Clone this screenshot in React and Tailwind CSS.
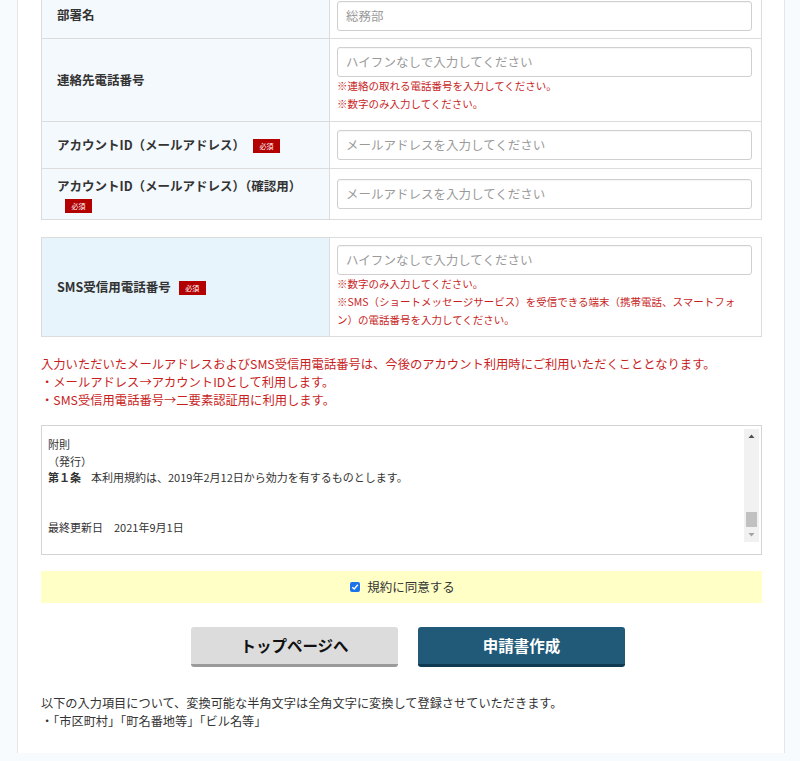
import React from "react";

const Badge = () => (
  <span className="inline-block align-middle ml-[8px] w-[27px] h-[14px] bg-[#b30000] text-white text-[7px] leading-[14px] text-center font-normal">必須</span>
);

const Input = ({ placeholder }) => (
  <div className="h-[30px] w-full border border-[#cfcfcf] rounded-[3px] bg-white flex items-center px-[8px] text-[12.5px] text-[#9a9a9a] shadow-[inset_0_1px_1px_rgba(0,0,0,0.04)]">
    {placeholder}
  </div>
);

const Note = ({ children }) => (
  <p className="text-[10.5px] leading-[18px] text-[#c81e1e]">{children}</p>
);

export default function App() {
  return (
    <div
      className="min-h-[761px] bg-[#f8fbfd] overflow-hidden"
      style={{ fontFamily: '"Noto Sans CJK JP", "Noto Sans", sans-serif' }}
    >
      <div className="ml-[17px] w-[768px] min-h-[761px] bg-white border-x border-[#e6e6e6] pl-[23px] pr-[22px] pb-[20px] text-[#333]">
        {/* first table */}
        <div className="mt-[-8px] border border-[#dcdcdc]">
          <div className="flex border-b border-[#dcdcdc]">
            <div className="w-[288px] shrink-0 bg-[#f3f9fd] border-r border-[#dcdcdc] pl-[15px] flex items-center text-[12.5px] font-bold">
              部署名
            </div>
            <div className="flex-1 pl-[7px] pr-[9px] pt-[8px] pb-[7px]">
              <Input placeholder="総務部" />
            </div>
          </div>
          <div className="flex border-b border-[#dcdcdc]">
            <div className="w-[288px] shrink-0 bg-[#f3f9fd] border-r border-[#dcdcdc] pl-[15px] flex items-center text-[12.5px] font-bold">
              連絡先電話番号
            </div>
            <div className="flex-1 pl-[7px] pr-[9px] pt-[8px] pb-[8px]">
              <Input placeholder="ハイフンなしで入力してください" />
              <Note>※連絡の取れる電話番号を入力してください。</Note>
              <Note>※数字のみ入力してください。</Note>
            </div>
          </div>
          <div className="flex border-b border-[#dcdcdc]">
            <div className="w-[288px] shrink-0 bg-[#f3f9fd] border-r border-[#dcdcdc] pl-[15px] flex items-center text-[12.5px] font-bold">
              <span>
                アカウントID（メールアドレス）
                <Badge />
              </span>
            </div>
            <div className="flex-1 pl-[7px] pr-[9px] py-[8px]">
              <Input placeholder="メールアドレスを入力してください" />
            </div>
          </div>
          <div className="flex">
            <div className="w-[288px] shrink-0 bg-[#f3f9fd] border-r border-[#dcdcdc] pl-[15px] pr-[10px] pt-[8px] pb-[6px] text-[12.5px] leading-[18px] font-bold">
              <div>アカウントID（メールアドレス）（確認用）</div>
              <div className="leading-[18px]">
                <Badge />
              </div>
            </div>
            <div className="flex-1 pl-[7px] pr-[9px] flex items-center">
              <Input placeholder="メールアドレスを入力してください" />
            </div>
          </div>
        </div>

        {/* SMS table */}
        <div className="mt-[17px] border border-[#dcdcdc] flex">
          <div className="w-[288px] shrink-0 bg-[#e8f4fb] border-r border-[#dcdcdc] pl-[15px] flex items-center text-[12.5px] font-bold">
            <span>
              SMS受信用電話番号
              <Badge />
            </span>
          </div>
          <div className="flex-1 pl-[7px] pr-[9px] pt-[7px] pb-[7px]">
            <Input placeholder="ハイフンなしで入力してください" />
            <Note>※数字のみ入力してください。</Note>
            <Note>
              ※SMS（ショートメッセージサービス）を受信できる端末（携帯電話、スマートフォ
              <br />
              ン）の電話番号を入力してください。
            </Note>
          </div>
        </div>

        {/* red paragraph */}
        <div className="mt-[18px] text-[12.3px] leading-[18px] text-[#c81e1e]">
          <p>入力いただいたメールアドレスおよびSMS受信用電話番号は、今後のアカウント利用時にご利用いただくこととなります。</p>
          <p>・メールアドレス→アカウントIDとして利用します。</p>
          <p>・SMS受信用電話番号→二要素認証用に利用します。</p>
        </div>

        {/* terms box */}
        <div className="mt-[16px] border border-[#d4d4d4] pt-[3px] pl-[3px] pr-[2px] pb-[12px] flex">
          <div className="flex-1 h-[113px] pl-[3px] pt-[7px] text-[11px] leading-[16.5px] text-[#333]">
            <p>附則</p>
            <p>（発行）</p>
            <p>
              <span className="font-bold">第１条</span>
              <span className="ml-[10px]">本利用規約は、2019年2月12日から効力を有するものとします。</span>
            </p>
            <p>&nbsp;</p>
            <p>&nbsp;</p>
            <p>最終更新日　2021年9月1日</p>
          </div>
          <div className="w-[15px] h-[113px] bg-[#f1f1f1] flex flex-col items-center">
            <svg width="15" height="15" viewBox="0 0 15 15" className="shrink-0">
              <path d="M4.5 9 L10.5 9 L7.5 5.5 Z" fill="#505050" />
            </svg>
            <div className="flex-1 w-full relative">
              <div className="absolute left-[2px] right-[2px] bottom-[0px] h-[15px] bg-[#c1c1c1]" />
            </div>
            <svg width="15" height="15" viewBox="0 0 15 15" className="shrink-0">
              <path d="M4.5 6 L10.5 6 L7.5 9.5 Z" fill="#a3a3a3" />
            </svg>
          </div>
        </div>

        {/* agree bar */}
        <div className="mt-[16px] h-[32px] bg-[#ffffc6] flex items-center justify-center gap-[7px] pl-[2px]">
          <span className="w-[10px] h-[10px] rounded-[2px] bg-[#1a73e8] flex items-center justify-center">
            <svg width="8" height="8" viewBox="0 0 8 8">
              <path d="M1.3 4.2 L3.2 6 L6.8 1.8" stroke="white" strokeWidth="1.4" fill="none" />
            </svg>
          </span>
          <span className="text-[12.5px] text-[#333]">規約に同意する</span>
        </div>

        {/* buttons */}
        <div className="mt-[24px] flex justify-center gap-[20px] pl-[13px]">
          <button className="w-[207px] h-[40px] rounded-[3px] bg-[#dcdcdc] border-b-[3px] border-[#9a9a9a] text-[15.5px] font-bold text-[#111]">
            トップページへ
          </button>
          <button className="w-[207px] h-[40px] rounded-[3px] bg-[#205a78] border-b-[3px] border-[#0f3a52] text-[15.5px] font-bold text-white">
            申請書作成
          </button>
        </div>

        {/* bottom note */}
        <div className="mt-[27px] text-[12.2px] leading-[18px] text-[#333]">
          <p>以下の入力項目について、変換可能な半角文字は全角文字に変換して登録させていただきます。</p>
          <p>・「市区町村」「町名番地等」「ビル名等」</p>
        </div>
      </div>
    </div>
  );
}
